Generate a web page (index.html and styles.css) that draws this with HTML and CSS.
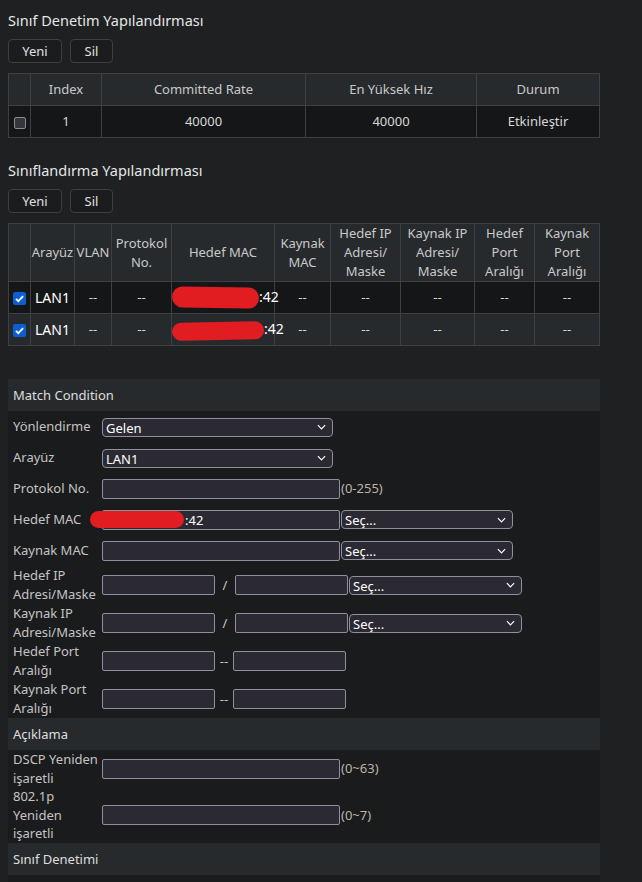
FILE: index.html
```html
<!DOCTYPE html>
<html lang="tr">
<head>
  <meta charset="UTF-8" />
  <title>Sınıf Denetim</title>
  <link rel="stylesheet" href="styles.css">
</head>
<body>
  <div class="page">
    <h2 class="section-title">Sınıf Denetim Yapılandırması</h2>
    <div class="toolbar">
      <button class="btn btn-new">Yeni</button>
      <button class="btn btn-del">Sil</button>
    </div>
    <table class="grid grid-policer">
      <colgroup>
        <col style="width:22px"><col style="width:71px"><col style="width:204px"><col style="width:171px"><col>
      </colgroup>
      <thead>
        <tr><th></th><th>Index</th><th>Committed Rate</th><th>En Yüksek Hız</th><th>Durum</th></tr>
      </thead>
      <tbody>
        <tr class="row-dark">
          <td><input type="checkbox" class="chk"></td>
          <td>1</td><td>40000</td><td>40000</td><td>Etkinleştir</td>
        </tr>
      </tbody>
    </table>

    <h2 class="section-title second">Sınıflandırma Yapılandırması</h2>
    <div class="toolbar">
      <button class="btn btn-new">Yeni</button>
      <button class="btn btn-del">Sil</button>
    </div>
    <table class="grid grid-class">
      <colgroup>
        <col style="width:22px"><col style="width:44px"><col style="width:37px"><col style="width:60px">
        <col style="width:103px"><col style="width:56px"><col style="width:70px"><col style="width:74px">
        <col style="width:60px"><col>
      </colgroup>
      <thead>
        <tr>
          <th></th><th>Arayüz</th><th>VLAN</th><th>Protokol No.</th><th>Hedef MAC</th><th>Kaynak MAC</th>
          <th>Hedef IP Adresi/ Maske</th><th>Kaynak IP Adresi/ Maske</th><th>Hedef Port Aralığı</th><th>Kaynak Port Aralığı</th>
        </tr>
      </thead>
      <tbody>
        <tr class="row-dark">
          <td><input type="checkbox" class="chk" checked></td>
          <td class="iface">LAN1</td><td>--</td><td>--</td>
          <td class="mac"><span class="redact r1"></span>:42</td>
          <td>--</td><td>--</td><td>--</td><td>--</td><td>--</td>
        </tr>
        <tr class="row-light">
          <td><input type="checkbox" class="chk" checked></td>
          <td class="iface">LAN1</td><td>--</td><td>--</td>
          <td class="mac"><span class="redact r2"></span>:42</td>
          <td>--</td><td>--</td><td>--</td><td>--</td><td>--</td>
        </tr>
      </tbody>
    </table>

    <div class="form-panel">
      <table class="form">
        <tr class="group"><td colspan="2">Match Condition</td></tr>
        <tr>
          <td class="lbl">Yönlendirme</td>
          <td><select class="sel w231"><option>Gelen</option></select></td>
        </tr>
        <tr>
          <td class="lbl">Arayüz</td>
          <td><select class="sel w231"><option>LAN1</option></select></td>
        </tr>
        <tr>
          <td class="lbl">Protokol No.</td>
          <td><input class="txt w238" type="text"><span class="hint">(0-255)</span></td>
        </tr>
        <tr>
          <td class="lbl mac-lbl">Hedef MAC<span class="redact r3"></span></td>
          <td><input class="txt w238 mac-val" type="text" value=":42"><select class="sel w172"><option>Seç...</option></select></td>
        </tr>
        <tr>
          <td class="lbl">Kaynak MAC</td>
          <td><input class="txt w238" type="text"><select class="sel w172"><option>Seç...</option></select></td>
        </tr>
        <tr class="tall">
          <td class="lbl">Hedef IP Adresi/Maske</td>
          <td><input class="txt w113" type="text"><span class="sep slash">/</span><input class="txt w113" type="text"><select class="sel w173"><option>Seç...</option></select></td>
        </tr>
        <tr class="tall">
          <td class="lbl">Kaynak IP Adresi/Maske</td>
          <td><input class="txt w113" type="text"><span class="sep slash">/</span><input class="txt w113" type="text"><select class="sel w173"><option>Seç...</option></select></td>
        </tr>
        <tr class="tall">
          <td class="lbl">Hedef Port Aralığı</td>
          <td><input class="txt w113" type="text"><span class="sep dash">--</span><input class="txt w113" type="text"></td>
        </tr>
        <tr class="tight">
          <td class="lbl">Kaynak Port Aralığı</td>
          <td><input class="txt w113" type="text"><span class="sep dash">--</span><input class="txt w113" type="text"></td>
        </tr>
        <tr class="group"><td colspan="2">Açıklama</td></tr>
        <tr class="tight">
          <td class="lbl dense">DSCP Yeniden işaretli</td>
          <td><input class="txt w238" type="text"><span class="hint">(0~63)</span></td>
        </tr>
        <tr class="tight">
          <td class="lbl dense">802.1p Yeniden işaretli</td>
          <td><input class="txt w238" type="text"><span class="hint">(0~7)</span></td>
        </tr>
        <tr class="group"><td colspan="2">Sınıf Denetimi</td></tr>
        <tr>
          <td class="lbl">Sınıf Denetim</td>
          <td></td>
        </tr>
      </table>
    </div>
  </div>
</body>
</html>
```

FILE: styles.css
```css
html, body {
  margin: 0;
  background: #1e2022;
  color: #d4d4d4;
  font-family: "Noto Sans", "Open Sans", sans-serif;
  font-size: 13px;
  overflow: hidden;
}

.page {
  width: 592px;
  padding: 8px 8px 0;
}

/* başlıklar ve butonlar */
.section-title {
  margin: 0 0 7px;
  font-size: 14.5px;
  font-weight: normal;
  line-height: 24px;
  color: #e6e6e6;
}
.section-title.second {
  margin-top: 20px;
}
.toolbar {
  display: flex;
  gap: 8px;
  margin-bottom: 10px;
}
.btn {
  height: 24px;
  padding: 0;
  background: #1b1c1e;
  border: 1px solid #3c3f43;
  border-radius: 4px;
  color: #e0e0e0;
  font-family: inherit;
  font-size: 13px;
}
.btn-new { width: 54px; }
.btn-del { width: 43px; }

/* tablolar */
.grid {
  width: 592px;
  border-collapse: collapse;
  table-layout: fixed;
  text-align: center;
}
.grid th,
.grid td {
  border: 1px solid #3d4044;
  padding: 0;
  line-height: 19px;
  font-weight: normal;
}
.grid th {
  background: #272a2d;
  color: #c9c9c9;
  height: 31px;
}
.grid td {
  height: 31px;
  color: #d8d8d8;
}
.grid-class th {
  height: 57px;
}
.grid-class td {
  height: 31px;
}
.row-dark td { background: #151618; }
.row-light td { background: #272a2d; }
.grid td.iface {
  color: #ffffff;
  font-size: 14px;
}
.grid td.mac {
  color: #ffffff;
  font-size: 14px;
  text-align: right;
  white-space: nowrap;
}

.chk {
  appearance: none;
  width: 12px;
  height: 12px;
  margin: 0;
  vertical-align: middle;
  background: #35353d;
  border: 1px solid #8a8a96;
  border-radius: 2px;
}
.chk:checked {
  width: 13px;
  height: 13px;
  background: #0b5fd3 url("data:image/svg+xml,%3Csvg xmlns='http://www.w3.org/2000/svg' viewBox='0 0 13 13'%3E%3Cpath d='M3 6.8l2.3 2.3 4.8-5' fill='none' stroke='white' stroke-width='1.8'/%3E%3C/svg%3E") center / 13px 13px no-repeat;
  border: none;
}

/* kırmızı karalama */
.redact {
  display: inline-block;
  background: #e21d22;
  border-radius: 11px;
  vertical-align: middle;
}
.r1 { width: 87px; height: 21px; transform: rotate(1deg); }
.r2 { width: 92px; height: 18px; transform: rotate(-1deg); }

/* form */
.form-panel {
  margin-top: 33px;
  background: #1a1b1d;
  height: 600px;
}
.form {
  width: 592px;
  border-collapse: collapse;
}
.form td {
  padding: 0;
  height: 31px;
  line-height: 19px;
  white-space: nowrap;
}
.form tr.tall td {
  height: 38px;
}
.form tr.tight td {
  height: 37px;
}
.form tr.group td {
  background: #272a2d;
  color: #dedede;
  height: 31px;
  padding: 1px 0 0 5px;
}
.form td.lbl {
  width: 89px;
  padding-left: 5px;
  color: #c4c4c4;
  white-space: normal;
}
.form td.dense {
  line-height: 18.5px;
}
.form td.mac-lbl {
  position: relative;
}
.r3 {
  position: absolute;
  left: 82px;
  top: 7px;
  width: 94px;
  height: 17px;
  z-index: 2;
}

.txt,
.sel {
  box-sizing: border-box;
  height: 20px;
  margin: 0;
  padding: 0 4px;
  background: #2b2a33;
  border: 1px solid #8f8f9d;
  border-radius: 2px;
  color: #ffffff;
  font-family: inherit;
  font-size: 13px;
  vertical-align: middle;
}
.sel {
  appearance: none;
  height: 19px;
  padding: 0 18px 0 3px;
  border-radius: 4px;
  background: #2b2a33 url("data:image/svg+xml,%3Csvg xmlns='http://www.w3.org/2000/svg' viewBox='0 0 10 6'%3E%3Cpath d='M1 1l4 4 4-4' fill='none' stroke='white' stroke-width='1.3'/%3E%3C/svg%3E") right 6px center / 9px 6px no-repeat;
}
.mac-val {
  padding-left: 82px;
}
.w113 { width: 113px; }
.w172 { width: 172px; margin-left: 1px; }
.w173 { width: 173px; margin-left: 1px; }
.w231 { width: 231px; }
.w238 { width: 238px; }

.hint {
  margin-left: 1px;
  color: #bcb5a8;
  vertical-align: middle;
}
.sep {
  display: inline-block;
  text-align: center;
  color: #c8c8c8;
  vertical-align: middle;
}
.slash { width: 20px; }
.dash { width: 18px; }
```
